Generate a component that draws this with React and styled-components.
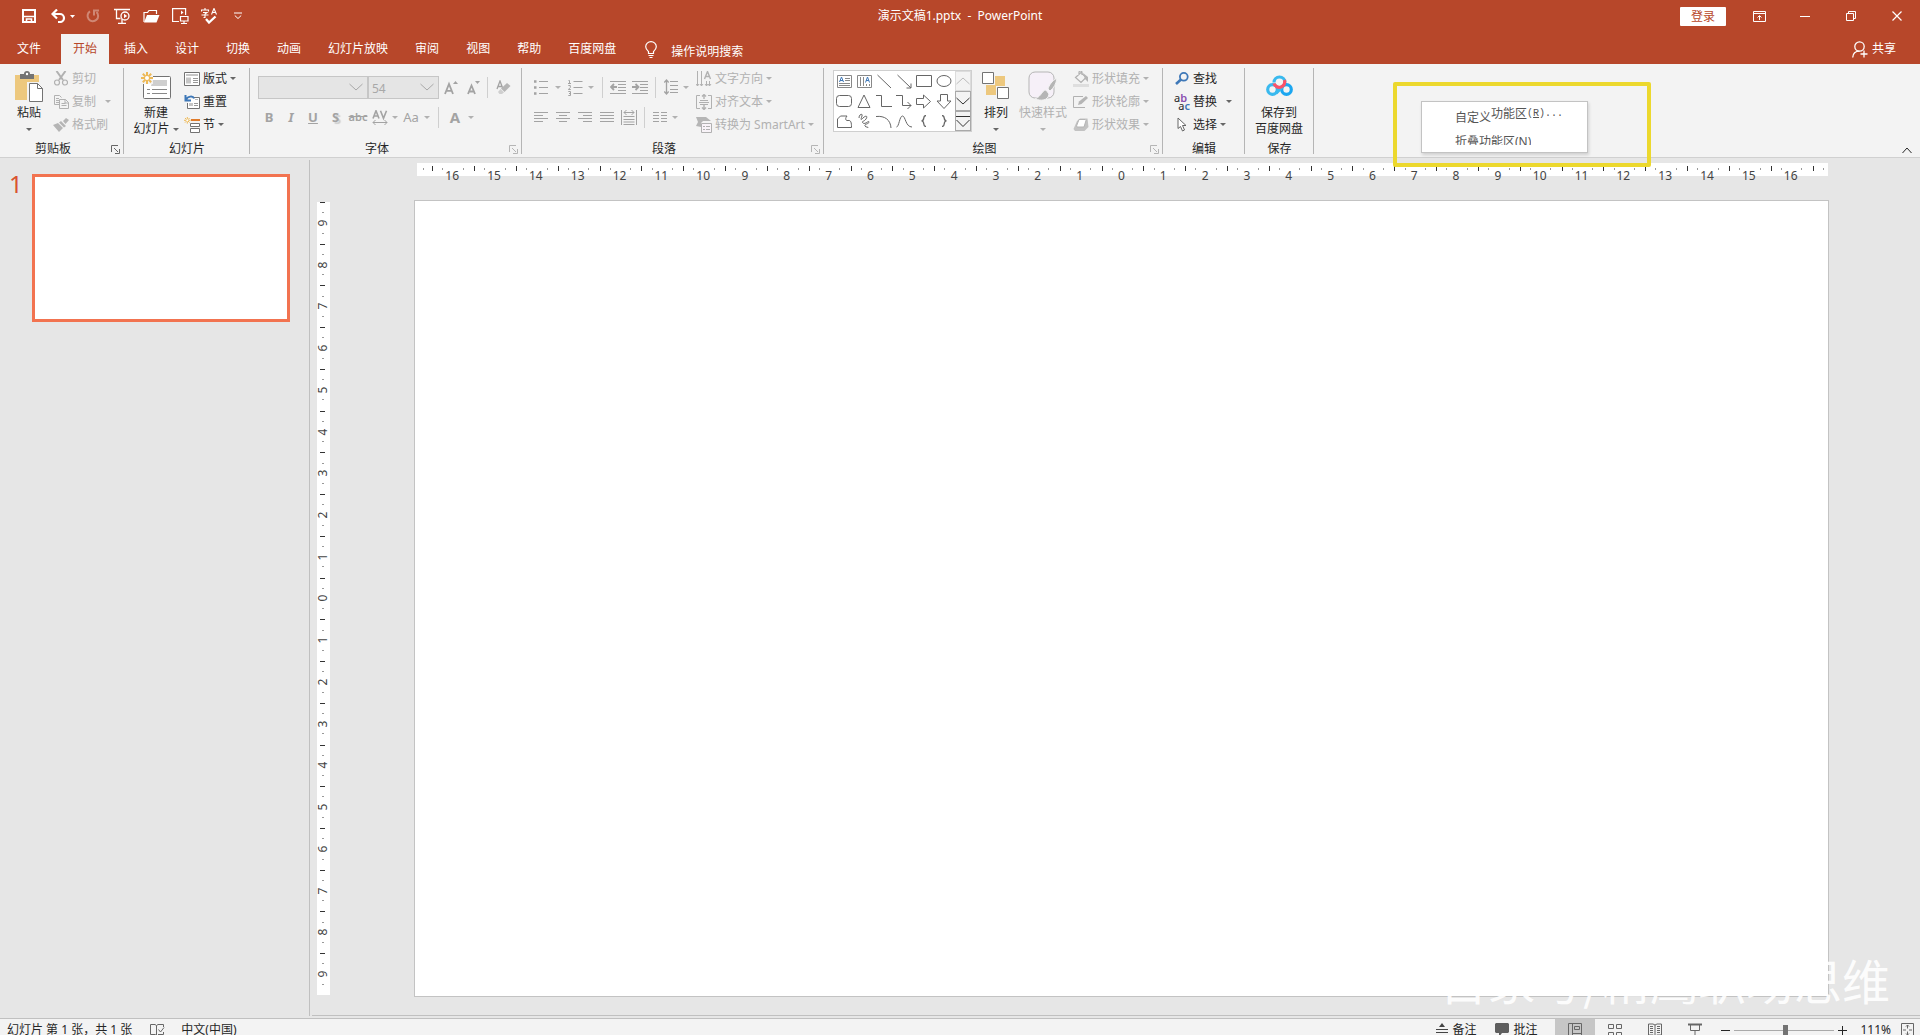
import React, { useState } from 'react';
import styled, { createGlobalStyle, css } from 'styled-components';

const GlobalStyle = createGlobalStyle`
  * { box-sizing: border-box; }
  body {
    margin: 0;
    overflow: hidden;
    background: #e6e6e6;
    color: #262626;
    font: 12px/16px "Noto Sans", "Noto Sans CJK SC", sans-serif;
  }
  button, input, select {
    margin: 0;
    padding: 0;
    border: 0;
    background: none;
    color: inherit;
    font: inherit;
  }
`

const Page = styled.div`
  display: flex;
  flex-direction: column;
  height: 100vh;
`

/* title bar */

const TitleBar = styled.header`
  display: grid;
  grid-template-columns: 1fr auto 1fr;
  align-items: center;
  height: 32px;
  background: #b7472a;
  color: #fff;
`
const QuickAccess = styled.div`
  display: flex;
  align-items: center;
  padding-left: 22px;
`
const QuickButton = styled.button`
  display: flex;
  align-items: center;
  gap: 4px;
  margin-right: ${p => p.$gap || 12}px;
  opacity: ${p => p.disabled ? 0.35 : 1};
`
const Title = styled.h1`
  margin: 0;
  font-size: 12px;
  font-weight: 400;
  white-space: pre;
`
const WindowControls = styled.div`
  display: flex;
  justify-content: flex-end;
  align-items: center;
`
const SignIn = styled.button`
  width: 46px;
  height: 19px;
  margin: 0 10px 0 0;
  line-height: 19px;
  border-radius: 1px;
  background: #fff;
  color: #b7472a;
`
const WindowButton = styled.button`
  display: flex;
  align-items: center;
  justify-content: center;
  width: 46px;
  height: 32px;
`

/* tabs */

const TabBar = styled.nav`
  display: flex;
  align-items: flex-end;
  height: 32px;
  padding: 0 24px 0 5px;
  background: #b7472a;
  color: #fff;
`
const Tab = styled.button`
  height: 30px;
  margin-right: ${p => p.$file ? 8 : 3}px;
  padding: 0 12px;
  line-height: 30px;
  ${p => p.$active && css`
    background: #f3f3f3;
    color: #b7472a;
  `}
`
const TellMe = styled.label`
  display: flex;
  align-items: center;
  gap: 14px;
  height: 30px;
  margin-left: 14px;
`
const TellMeInput = styled.input`
  width: 90px;
  height: 20px;
  padding-top: 4px;
  line-height: 16px;
  &::placeholder { color: #fff; opacity: 1; }
`
const Share = styled.button`
  display: flex;
  align-items: center;
  gap: 4px;
  height: 30px;
  margin-left: auto;
`

/* ribbon */

const RibbonBar = styled.section`
  position: relative;
  display: flex;
  height: 94px;
  background: #f3f3f3;
  border-bottom: 1px solid #d0d0d0;
`
const GroupBox = styled.div`
  display: flex;
  flex-direction: column;
  flex: none;
  width: ${p => p.$width}px;
  padding-top: 3px;
  background: linear-gradient(#b5b5b5, #b5b5b5) right 4px / 1px 86px no-repeat;
`
const GroupBody = styled.div`
  display: flex;
  flex: 1;
  padding-left: ${p => p.$pad}px;
`
const GroupFooter = styled.div`
  display: flex;
  align-items: center;
  height: 16px;
`
const GroupLabel = styled.span`
  flex: 1;
  text-align: center;
`
const Launcher = styled.button`
  display: flex;
  margin: 0 4px 0 5px;
  color: ${p => p.disabled ? '#b5b5b5' : '#666'};
`
const BigButton = styled.button`
  display: flex;
  flex-direction: column;
  align-items: center;
  width: ${p => p.$width}px;
  height: 72px;
  margin-left: ${p => p.$left || 0}px;
  color: ${p => p.disabled ? '#b1b1b1' : '#262626'};
`
const BigIcon = styled.span`
  display: flex;
  align-items: center;
  height: 38px;
`
const BigLine = styled.span`
  display: flex;
  align-items: center;
  gap: 3px;
  height: 16px;
  white-space: nowrap;
`
const SmallColumn = styled.div`
  display: flex;
  flex-direction: column;
  align-items: flex-start;
  margin-left: ${p => p.$left || 0}px;
`
const SmallButton = styled.button`
  display: flex;
  align-items: center;
  gap: 3px;
  height: 23px;
  color: ${p => p.disabled ? '#b1b1b1' : '#262626'};
  white-space: nowrap;
`
const SmallIcon = styled.span`
  display: flex;
  justify-content: center;
  width: 16px;
`
const Arrow = styled.span`
  width: 0;
  height: 0;
  margin-left: ${p => p.$far ? 6 : 0}px;
  border: 3px solid transparent;
  border-top-color: ${p => p.$dim ? '#b1b1b1' : '#666'};
  border-bottom: 0;
`
const ToolRows = styled.div`
  display: flex;
  flex-direction: column;
  gap: 6px;
  width: ${p => p.$width}px;
  padding-top: 8px;
`
const ToolRow = styled.div`
  display: flex;
  align-items: center;
  height: 24px;
`
const Tool = styled.button`
  display: flex;
  align-items: center;
  justify-content: center;
  flex: none;
  width: ${p => p.$width || 22}px;
  height: 22px;
  color: #a3a3a3;
  font-size: ${p => p.$size || 13}px;
  font-weight: ${p => p.$bold ? 700 : 400};
`
const Struck = styled.s`
  font-size: 11px;
  font-weight: 600;
`
const Shadowed = styled.span`
  text-shadow: 2px 2px 1px #ccc;
`
const Divider = styled.i`
  width: 1px;
  height: 21px;
  margin: 0 ${p => p.$right}px 0 ${p => p.$left}px;
  background: #cfcfcf;
`
const Combo = styled.span`
  display: flex;
  align-items: center;
  width: ${p => p.$width}px;
  height: 23px;
  padding-right: 4px;
  background: #e5e5e5;
  border: 1px solid #c6c6c6;
  color: #a8a8a8;
`
const ComboSelect = styled.select`
  flex: 1;
  min-width: 0;
  height: 20px;
  padding: 3px 0 0 3px;
  appearance: none;
  opacity: 1;
  color: #a8a8a8;
`
const Gallery = styled.div`
  display: flex;
  width: 139px;
  height: 62px;
  margin-top: 3px;
  background: #fff;
  border: 1px solid #cfcfcf;
`
const ShapeGrid = styled.div`
  display: grid;
  grid-template-columns: repeat(6, 20px);
  grid-template-rows: repeat(3, 20px);
  flex: 1;
`
const ShapeButton = styled.button`
  display: flex;
  align-items: center;
  justify-content: center;
`
const GalleryScroll = styled.div`
  display: flex;
  flex-direction: column;
  width: 16px;
`
const ScrollButton = styled.button`
  display: flex;
  flex: 1;
  align-items: center;
  justify-content: center;
  background: #f3f3f3;
  border: 1px solid ${p => p.disabled ? '#dcdcdc' : '#a9a9a9'};
  color: ${p => p.disabled ? '#bbb' : '#333'};
`
const Collapse = styled.button`
  display: flex;
  align-self: flex-end;
  margin: 0 8px 3px auto;
`
const Highlight = styled.div`
  position: absolute;
  z-index: 2;
  top: 18px;
  left: 1393px;
  width: 258px;
  height: 85px;
  padding: 15px 59px 15px 24px;
  border: 4px solid #ecd82d;
  border-radius: 2px;
`
const Menu = styled.div`
  height: 52px;
  background: #fff;
  border: 1px solid #c3c3c3;
  box-shadow: 1px 2px 3px rgba(0, 0, 0, 0.15);
  color: #555;
`
const MenuItem = styled.button`
  display: flex;
  height: ${p => p.$short ? 17 : 26}px;
  padding-left: 33px;
  overflow: hidden;
  line-height: ${p => p.$short ? 27 : 24}px;
  white-space: nowrap;
`
const Lowered = styled.span`
  align-self: flex-end;
  line-height: 20px;
`
const Mono = styled.span`
  font: 10px/24px "Liberation Mono", monospace;
`

/* workspace */

const Workspace = styled.main`
  display: flex;
  flex: 1;
  min-height: 0;
`
const SlidePane = styled.aside`
  display: flex;
  align-items: flex-start;
  width: 310px;
  margin: 2px 0;
  padding: 14px 19px 0 9px;
  border-right: 1px solid #c0c0c0;
`
const SlideNumber = styled.span`
  width: 23px;
  margin-top: -6px;
  color: #d9532f;
  font-size: 24px;
  line-height: 32px;
`
const Thumbnail = styled.button`
  flex: 1;
  height: 148px;
  background: #fff;
  border: 3px solid #f27350;
`
const Editor = styled.div`
  display: flex;
  flex: 1;
  flex-direction: column;
  min-width: 0;
`
const TopRuler = styled.div`
  display: flex;
  height: 13px;
  margin: 5px 92px 24px 107px;
  background: #fff;
  color: #444;
`
const TopUnit = styled.span`
  flex: 167 0 0;
  padding: 5px 2px 0 0;
  text-align: center;
  background:
    linear-gradient(#333, #333) 0 3px / 1px 5px no-repeat,
    linear-gradient(#999, #999) 25% 5px / 1px 2px no-repeat,
    linear-gradient(#999, #999) 75% 5px / 1px 2px no-repeat;
`
const TopEnd = styled.span`
  flex: 64 0 0;
  background:
    linear-gradient(#333, #333) 0 3px / ${p => p.$last ? 1 : 0}px 5px no-repeat,
    linear-gradient(#999, #999) ${p => p.$last ? 70 : 40}% 5px / 1px 2px no-repeat;
`
const Canvas = styled.div`
  display: flex;
  flex: 1;
  min-height: 0;
  margin: 0 91px 18px 7px;
`
const SideRuler = styled.div`
  display: flex;
  flex-direction: column;
  width: 13px;
  margin: 2px 84px 2px 0;
  background: #fff;
  color: #444;
`
const SideUnit = styled.span`
  display: flex;
  flex: 1;
  align-items: center;
  justify-content: center;
  background:
    linear-gradient(#333, #333) 3px 0 / 5px 1px no-repeat,
    linear-gradient(#999, #999) 5px 25% / 2px 1px no-repeat,
    linear-gradient(#999, #999) 5px 75% / 2px 1px no-repeat;
`
const Turned = styled.span`
  transform: rotate(-90deg);
`
const Slide = styled.section`
  flex: 1;
  background: #fff;
  border: 1px solid #c3c3c3;
`
const PaneEdge = styled.div`
  height: 3px;
  margin-left: 2px;
  border-top: 1px solid #c0c0c0;
`
const Watermark = styled.div`
  position: absolute;
  right: 30px;
  bottom: 20px;
  color: rgba(255, 255, 255, 0.93);
  font: 48px/72px "Noto Sans CJK SC", sans-serif;
  pointer-events: none;
`

/* status bar */

const StatusBar = styled.footer`
  display: flex;
  align-items: flex-start;
  height: 17px;
  padding: 0 6px 0 7px;
  overflow: hidden;
  background: #f3f3f3;
  border-top: 1px solid #c0c0c0;
`
const StatusItem = styled.button`
  display: flex;
  flex: none;
  align-items: center;
  justify-content: center;
  gap: 4px;
  height: 22px;
  width: ${p => p.$width ? p.$width + 'px' : 'auto'};
  margin-right: ${p => p.$gap || 0}px;
  background: ${p => p.$active ? '#c6c6c6' : 'none'};
  color: ${p => p.$icon ? '#666' : '#262626'};
  white-space: pre;
`
const StatusSpace = styled.span`
  flex: 1;
`
const ZoomSlider = styled.input`
  width: 100px;
  height: 22px;
  margin: 0 4px;
  appearance: none;
  &::-webkit-slider-runnable-track {
    height: 1px;
    background: #aaa;
  }
  &::-webkit-slider-thumb {
    appearance: none;
    width: 5px;
    height: 11px;
    margin-top: -5px;
    background: #737373;
  }
`

const Icon = ({ w, h, children, ...rest }) => (
  <svg width={w} height={h} viewBox={`0 0 ${w} ${h}`} fill="none" stroke="currentColor" aria-hidden="true" {...rest}>
    {children}
  </svg>
)

const Chevron = ({ up, w = 14, h = 8 }) => (
  <Icon w={w} h={h}>
    <path d={up ? `M.5 ${h - 1}L${w / 2} 1L${w - .5} ${h - 1}` : `M.5 1L${w / 2} ${h - 1}L${w - .5} 1`} />
  </Icon>
)

const SaveIcon = () => (
  <Icon w={14} h={14}><path d="M1 1h12v12H1z" strokeWidth="2" /><path d="M2 7.5h10M4.5 13v-3h5v3" strokeWidth="1.6" /></Icon>
)
const UndoIcon = () => (
  <Icon w={15} h={14}><path d="M2 5h7a4 4 0 0 1 0 8H7" strokeWidth="2.2" /><path d="M6 .5L1.5 5L6 9.5" strokeWidth="2.2" /></Icon>
)
const RedoIcon = () => (
  <Icon w={14} h={14}><path d="M4 2.4A5.3 5.3 0 1 0 10.5 3" strokeWidth="2" /><path d="M8 6.5V1.5h5" strokeWidth="2" /></Icon>
)
const ShowIcon = () => (
  <Icon w={17} h={16}>
    <path d="M0 1.5h16M2.5 2v8.5h4M8 11v4M4 15.5h8" strokeWidth="1.3" />
    <circle cx="11" cy="8" r="4" strokeWidth="1.3" /><path d="M10 5.8v4.4l3.2-2.2z" fill="currentColor" stroke="none" />
  </Icon>
)
const FolderIcon = () => (
  <Icon w={17} h={14}>
    <path d="M1 13V3.5h3.5L6 1.5h7.5V5" strokeWidth="1.2" /><path d="M1 13.5L4 6h12.5L13.5 13.5z" fill="currentColor" stroke="none" />
  </Icon>
)
const TouchIcon = () => (
  <Icon w={17} h={16}>
    <path d="M7 13.5H.6V.6h13V7" strokeWidth="1.2" /><path d="M9 2.5v4l2.5-2z" fill="currentColor" stroke="none" />
    <path d="M8.5 8.5h7.5v4.500h-7.5zM12 13v2M9 15.5h6" strokeWidth="1.2" />
  </Icon>
)
const SpellIcon = () => (
  <Icon w={17} h={16}>
    <path d="M4 0v1.5M.5 3.5V2h7v1.5M2 4.500h4L4 6v3.500H2.5M.5 7h7M10.5 6.5L13 .5l2.5 6M11.3 4.500h3.4" strokeWidth="1.1" />
    <path d="M5 11l3 3.5L14.5 8.5" strokeWidth="2.3" />
  </Icon>
)
const CustomizeIcon = () => (
  <Icon w={8} h={8}><path d="M0 1h8M.8 3.5L4 6.500L7.2 3.5" /></Icon>
)
const BulbIcon = () => (
  <Icon w={12} h={17}>
    <path d="M3.5 12.5v-2C2 9 .7 7.8.7 5.7a5.3 5 0 0 1 10.6 0c0 2.1-1.3 3.3-2.8 4.8v2zM3.5 14.5h5M4.500 16.5h3" strokeWidth="1.2" />
  </Icon>
)
const PersonIcon = () => (
  <Icon w={16} h={17}>
    <circle cx="7.5" cy="5.5" r="4.7" strokeWidth="1.3" /><path d="M.7 16.5C1 12 4 10.2 7.5 10.2M12 9.5v7M8.5 13h7" strokeWidth="1.3" />
  </Icon>
)
const PasteIcon = () => (
  <Icon w={28} h={31}>
    <path d="M0 4h24v25H0z" fill="#edc87e" stroke="none" />
    <path d="M5 3h4a3 3 0 0 1 6 0h4v5H5z" fill="#737373" stroke="none" /><circle cx="12" cy="3" r="1.2" fill="#fff" stroke="none" />
    <path d="M12 11h12v20H12z" fill="#f3f3f3" stroke="none" />
    <path d="M14.5 12.5h8l5 5v13h-13z" fill="#fff" stroke="#737373" /><path d="M22.5 12.5v5h5" stroke="#737373" />
  </Icon>
)
const CutIcon = () => (
  <Icon w={14} h={15}>
    <path d="M2.5 0L9 9M11.5 0L5 9" strokeWidth="2" /><circle cx="3" cy="11.5" r="2.5" strokeWidth="1.2" /><circle cx="11" cy="11.5" r="2.5" strokeWidth="1.2" />
  </Icon>
)
const CopyIcon = () => (
  <Icon w={15} h={14}>
    <path d="M5 9.5H.5V.5h5l2 2M2 3.5h3M2 5.5h3M2 7.5h3M5.5 4.5h6l3 3v6h-9zM7.5 8.5h4M7.5 10.5h5M11 4.5V8h3.5" />
  </Icon>
)
const BrushIcon = () => (
  <Icon w={16} h={14}>
    <path d="M0 7l5-2 5 5-4 4zM6 4.5l2-1.5 5 5-2 1.5zM10 3l3-3 3 2-3.5 4z" fill="#b5b5b5" stroke="none" />
  </Icon>
)
const Spark = ({ s = 1 }) => (
  <g stroke="#edb957" strokeWidth={s < 1 ? 1 : 2}>
    <path d={`M${6 * s} 0v${12 * s}M0 ${6 * s}h${12 * s}M${1.8 * s} ${1.8 * s}l${8.4 * s} ${8.4 * s}M${10.2 * s} ${1.8 * s}l${-8.4 * s} ${8.4 * s}`} />
    <circle cx={6 * s} cy={6 * s} r={2 * s} fill="#fff" stroke="none" />
  </g>
)
const NewSlideIcon = () => (
  <Icon w={31} h={28}>
    <rect x="2.5" y="4.5" width="27" height="22" rx="1" fill="#fff" stroke="#737373" />
    <path d="M12 8h14v6H10z" fill="#cfcfcf" stroke="none" /><path d="M6 17.5h3M11 17.5h15M6 21.5h3M11 21.5h15" stroke="#888" />
    <path d="M0 0h12v12H0z" fill="#f3f3f3" stroke="none" /><Spark />
  </Icon>
)
const LayoutIcon = () => (
  <Icon w={16} h={14} stroke="#737373">
    <path d="M.5.5h15v13H.5z" fill="#fff" /><path d="M2 3h12" stroke="#c6c6c6" strokeWidth="2" />
    <path d="M2 5.5h5v6H2z" fill="#c6c6c6" stroke="none" /><path d="M9 6.5h5M9 8.5h5M9 10.5h5" stroke="#999" />
  </Icon>
)
const ResetIcon = () => (
  <Icon w={16} h={14} stroke="#737373">
    <path d="M9 2.5h6.5v11H3.5V8" fill="#fff" /><path d="M11 4.5h3" stroke="#bbb" />
    <path d="M5 8h4v3H5z" fill="#c6c6c6" stroke="none" /><path d="M10 8.5h4M10 10.5h4" stroke="#999" />
    <path d="M1.5 0v5.5H7M2 5c1.5-4 7-4.5 8-1.5" stroke="#3e78b8" strokeWidth="2" />
  </Icon>
)
const SectionIcon = () => (
  <Icon w={16} h={16} stroke="#737373">
    <Spark s={0.55} /><path d="M7 3h9" stroke="#e07b2b" strokeWidth="2" /><path d="M6.5 6.5h9v3h-9z" fill="#fff" /><path d="M6.5 11.5h9v4h-9z" fill="#fff" />
  </Icon>
)
const EraserIcon = () => (
  <Icon w={15} h={15}>
    <path d="M1 9L4 1l3 8M2 6.5h4" strokeWidth="1.3" />
    <path d="M11 3l3.5 3L8.500 12 5 8.500z" fill="#b5b5b5" stroke="none" /><path d="M4.5 9l3.5 3.5L6 14H3.500L2 12z" fill="#cfcfcf" stroke="none" />
  </Icon>
)
const GrowIcon = ({ small }) => (
  <Icon w={14} h={15}>
    <path d={small ? 'M2 14L5.5 5.500 9 14M3.5 11.5h4' : 'M1 14L5 4l4 10M2.5 10.8h5'} strokeWidth="1.8" />
    <path d={small ? 'M9 1h5l-2.5 3z' : 'M9 4h5l-2.5-3z'} fill="currentColor" stroke="none" />
  </Icon>
)
const CharSpacingIcon = () => (
  <Icon w={16} h={15}>
    <path d="M1 8.5L4 .7l3 7.8M2 6h4M8.5.7l3 7.6 3-7.6" strokeWidth="1.6" /><path d="M1 12.5h14M3.5 10L1 12.5 3.5 15M12.5 10l2.5 2.5-2.5 2.5" />
  </Icon>
)
const BulletIcon = () => (
  <Icon w={14} h={16}>
    <path d="M5 2.5h9M5 8.5h9M5 14.5h9" strokeWidth="1.1" /><path d="M0 2.5h2.5M0 8.5h2.5M0 14.5h2.5" strokeWidth="2.5" />
  </Icon>
)
const NumberIcon = () => (
  <Icon w={15} h={17}>
    <path d="M5.5 2.5h9M5.5 8.5h9M5.5 14.5h9" /><path d="M.5 1.5h1v3M0 4.5h3M.3 6.5h2v2l-2 2h2.5M.3 12.5h2.2v4H.3M1 14.5h1.5" />
  </Icon>
)
const IndentIcon = ({ more }) => (
  <Icon w={16} h={14}>
    <path d="M0 1.5h16M8 4.5h8M8 7.5h8M8 10.5h8M0 13.5h16" />
    <path d={more ? 'M0 7h6M3.5 4L6.5 7l-3 3' : 'M7 7H1M4 4L1 7l3 3'} strokeWidth="1.8" />
  </Icon>
)
const LineSpacingIcon = () => (
  <Icon w={15} h={16}>
    <path d="M6 2.5h8M6 6.5h8M6 10.5h8M6 13.5h8" /><path d="M2.5 1v14M.3 3.5L2.5 1l2.2 2.5M.3 12.5L2.5 15l2.2-2.5" strokeWidth="1.3" />
  </Icon>
)
const alignLines = {
  left: 'M0 4.5h9M0 10.5h9',
  center: 'M3 4.5h8M3 10.5h8',
  right: 'M5 4.5h9M5 10.5h9',
  justify: 'M0 4.5h14M0 10.5h14',
}
const AlignIcon = ({ kind }) => (
  <Icon w={14} h={12}><path d={'M0 1.5h14M0 7.5h14' + alignLines[kind]} /></Icon>
)
const DistributeIcon = () => (
  <Icon w={16} h={17}>
    <path d="M.5 1v15M15.5 1v15M3 3.5h10M5.5 1L3 3.5 5.5 6M10.5 1L13 3.5 10.5 6M2.5 7.5h11M2.5 10.500h11M2.5 13h11M2.5 15.5h11" />
  </Icon>
)
const ColumnsIcon = () => (
  <Icon w={14} h={12}><path d="M0 1.5h6M8 1.5h6M0 4.5h6M8 4.5h6M0 7.5h6M8 7.5h6M0 10.5h6M8 10.5h6" /></Icon>
)
const TextDirIcon = () => (
  <Icon w={16} h={16}>
    <path d="M1.5 0v15M5.5 0v15M10.5 10v5M13.5 10v5M0 13l1.5 2L3 13M4 13l1.5 2L7 13M9 13l1.5 2 1.5-2 1.5 2 1.5-2" />
    <path d="M8.5 8L11.5.5l3 7.5M9.5 5.5h4" strokeWidth="1.4" />
  </Icon>
)
const TextAlignIcon = () => (
  <Icon w={16} h={16}>
    <path d="M4 1.500H.5v13H4M12 1.500h3.500v13H12M4 6.5h8M3 8.5h10M4 10.5h8" /><path d="M8 0v5M6 2.5L8 .5l2 2M8 11v5M6 13.5l2 2 2-2" strokeWidth="1.4" />
  </Icon>
)
const SmartArtIcon = () => (
  <Icon w={16} h={16}>
    <path d="M0 0h10l5 4h-8L5 6v4L0 9l2-4z" fill="#b5b5b5" stroke="none" /><path d="M5.5 6.5h10v9h-10z" fill="#f8f3f8" /><path d="M7 9.5h2M10 9.5h4M7 12.5h2M10 12.5h4" />
  </Icon>
)
const ArrangeIcon = () => (
  <Icon w={28} h={28} stroke="#737373">
    <path d="M13 4h10v10H13zM4 13h10v10H4z" fill="#edc87e" stroke="none" /><path d="M.5.5h11v11H.5zM15.5 15.5h11v11h-11z" fill="#fff" />
  </Icon>
)
const StyleIcon = () => (
  <Icon w={30} h={30}>
    <rect x="1" y="1" width="25" height="26" rx="6" fill="#f6f0f8" stroke="#b5b5b5" />
    <path d="M29 7c-5 3-8 7-9 11l2 2c4-3 6-7 7-13zM18 19c-4 0-4 6-11 9 6 2 13 2 14-5z" fill="#b5b5b5" stroke="#f3f3f3" />
  </Icon>
)
const FillIcon = () => (
  <Icon w={16} h={16}>
    <path d="M0 13h16v3H0z" fill="#dedede" stroke="none" /><path d="M2.5 6.5L8 1.500l5 5-5 5zM6 4V1.5a1.500 1.5 0 0 1 3 0V4" strokeWidth="1.2" />
    <path d="M10 2l5 4v5l-3-3z" fill="#b5b5b5" stroke="none" />
  </Icon>
)
const OutlineIcon = () => (
  <Icon w={16} h={14}><path d="M10 1.5H.5v11H12" /><path d="M5 10l1-3.5L13 1l2 2-6.5 6z" fill="#b5b5b5" stroke="none" /></Icon>
)
const EffectIcon = () => (
  <Icon w={16} h={14}>
    <path d="M4 3l3-2.5h7.5L15.5 9l-4 4H2L.5 11z" fill="#c3c3c3" stroke="none" /><path d="M6 1.5h6l1 1-2 6.5H4L3.5 8z" fill="#fff" stroke="#b5b5b5" />
  </Icon>
)
const FindIcon = () => (
  <Icon w={14} h={13} stroke="#3e78b8"><circle cx="8.8" cy="4.8" r="3.9" strokeWidth="1.8" /><path d="M6 7.5L1 12" strokeWidth="2.6" /></Icon>
)
const PointerIcon = () => (
  <Icon w={10} h={15} stroke="#666"><path d="M1 1v10.5L3.5 9.5 5.5 14l2-1L5.5 8.5H9z" fill="#fff" /></Icon>
)
const ReplaceMark = styled.span`
  display: flex;
  flex-direction: column;
  width: 16px;
  font-size: 11px;
  line-height: 8px;
`
const ReplaceTop = styled.span`
  align-self: flex-start;
  b { font-weight: 600; color: #8a4fb0; }
`
const ReplaceBottom = styled.span`
  align-self: flex-end;
  b { font-weight: 600; color: #3e78b8; }
`
const CloudIcon = () => (
  <Icon w={27} h={22}>
    <circle cx="6.5" cy="14.5" r="4.8" stroke="#39b9ee" strokeWidth="3.2" /><circle cx="20.5" cy="14.5" r="4.8" stroke="#1ba6f0" strokeWidth="3.2" />
    <path d="M10 18l7-7" stroke="#39b9ee" strokeWidth="3.5" />
    <path d="M8 7.5a5.5 5.5 0 0 1 11 0" stroke="#39b9ee" strokeWidth="3.2" /><path d="M18.5 5a5.5 5.5 0 1 1-10.500 3.500" stroke="#fb5168" strokeWidth="3.2" />
  </Icon>
)
const LauncherIcon = () => (
  <Icon w={9} h={9}><path d="M.5 7V.5H7M3 3l4 4M8.5 4v4.5H4" /></Icon>
)

const shapes = [
  ['文本框', <Icon w={15} h={13}><path d="M.5.5h14v12H.5zM8 3.5h5M8 5.5h5M2 8.5h11M2 10.5h11" stroke="#888" /><path d="M2.500 7L4.500 2 6.500 7M3 5.5h3" stroke="#3e78b8" /></Icon>],
  ['竖排文本框', <Icon w={15} h={13}><path d="M.5.5h14v12H.5zM3.5 2v9M6.5 2v9M9.5 9v2M12.500 9v2" stroke="#888" /><path d="M8.5 7.5L10.5 2l2 5.5M9 5.500h3" stroke="#3e78b8" /></Icon>],
  ['直线', <Icon w={15} h={15}><path d="M.5 1L14 14" /></Icon>],
  ['箭头', <Icon w={15} h={15}><path d="M.5 1L14 14M14 9.5V14H9.5" /></Icon>],
  ['矩形', <Icon w={16} h={12}><path d="M.5.5h15v11H.5z" /></Icon>],
  ['椭圆', <Icon w={16} h={12}><ellipse cx="8" cy="6" rx="7" ry="5.5" /></Icon>],
  ['圆角矩形', <Icon w={16} h={12}><rect x=".5" y=".5" width="15" height="11" rx="3" /></Icon>],
  ['三角形', <Icon w={14} h={14}><path d="M7 1l6 12.5H1z" /></Icon>],
  ['肘形连接符', <Icon w={16} h={12}><path d="M0 .5h5.5v11H16" /></Icon>],
  ['肘形箭头', <Icon w={16} h={15}><path d="M0 1.5h6.500v10H15M11.5 8l3.5 3.5-3.5 3.5" /></Icon>],
  ['右箭头', <Icon w={16} h={15}><path d="M.5 4.5h7V1l7 6.5-7 6.500v-3.500h-7z" /></Icon>],
  ['下箭头', <Icon w={16} h={15}><path d="M4.5.5h7V7H15l-7 7.5L1 7h3.5z" /></Icon>],
  ['任意多边形', <Icon w={15} h={13}><path d="M.5 12.5V4l3-3H10C7.5 4 9 6 11 5.5c3-.5 3.5 2 3.5 7z" /></Icon>],
  ['曲线', <Icon w={12} h={16}><path d="M1 5c0-4 4-5 3-2S2 8 5 5s5-2 3 1-5 2-3 4 6-3 6-1-5 2-4 4 3 0 3 2" /></Icon>],
  ['弧形', <Icon w={16} h={13}><path d="M0 1.5C9 .5 14.5 5 15 13" /></Icon>],
  ['波形', <Icon w={16} h={13}><path d="M.5 12C3 12 3.5 1 6.500 1S9.5 12 16 12" /></Icon>],
  ['左大括号', <Icon w={8} h={12}><path d="M6 .5C2 .5 5.5 5.7 1.5 5.900 5.500 6 2 11.500 6 11.500" strokeWidth="1.3" /></Icon>],
  ['右大括号', <Icon w={8} h={12}><path d="M2 .5C6 .5 2.500 5.700 6.500 5.900 2.500 6 6 11.500 2 11.500" strokeWidth="1.3" /></Icon>],
];

const tabs = ['开始', '插入', '设计', '切换', '动画', '幻灯片放映', '审阅', '视图', '帮助', '百度网盘'];
const topUnits = Array.from({ length: 33 }, (_, i) => Math.abs(i - 16));
const sideUnits = Array.from({ length: 19 }, (_, i) => Math.abs(i - 9));

const Group = ({ label, width, pad, launcher, children }) => (
  <GroupBox $width={width}>
    <GroupBody $pad={pad}>{children}</GroupBody>
    <GroupFooter>
      <GroupLabel>{label}</GroupLabel>
      {launcher ? <Launcher disabled={launcher === 'off'} aria-label={label + '设置'}><LauncherIcon /></Launcher> : null}
    </GroupFooter>
  </GroupBox>
)

const Small = ({ icon, label, arrow, disabled }) => (
  <SmallButton disabled={disabled}>
    <SmallIcon>{icon}</SmallIcon>
    <span>{label}</span>
    {arrow ? <Arrow $dim={disabled} $far={arrow === 'far'} /> : null}
  </SmallButton>
)

const ToolArrow = ({ width = 8 }) => (
  <Tool disabled $width={width} aria-label="更多"><Arrow $dim /></Tool>
)

const Ribbon = () => (
  <RibbonBar>
    <Group label="剪贴板" width={124} pad={10} launcher="on">
      <BigButton $width={38}>
        <BigIcon><PasteIcon /></BigIcon>
        <BigLine>粘贴</BigLine>
        <BigLine><Arrow /></BigLine>
      </BigButton>
      <SmallColumn $left={5}>
        <Small icon={<CutIcon />} label="剪切" disabled />
        <Small icon={<CopyIcon />} label="复制" arrow="far" disabled />
        <Small icon={<BrushIcon />} label="格式刷" disabled />
      </SmallColumn>
    </Group>
    <Group label="幻灯片" width={126} pad={8}>
      <BigButton $width={48}>
        <BigIcon><NewSlideIcon /></BigIcon>
        <BigLine>新建</BigLine>
        <BigLine>幻灯片<Arrow /></BigLine>
      </BigButton>
      <SmallColumn $left={4}>
        <Small icon={<LayoutIcon />} label="版式" arrow />
        <Small icon={<ResetIcon />} label="重置" />
        <Small icon={<SectionIcon />} label="节" arrow />
      </SmallColumn>
    </Group>
    <Group label="字体" width={272} pad={8} launcher="off">
      <ToolRows $width={260}>
        <ToolRow>
          <Combo $width={110}>
            <ComboSelect disabled aria-label="字体" /><Chevron />
          </Combo>
          <Combo $width={71}>
            <ComboSelect disabled aria-label="字号"><option>54</option></ComboSelect><Chevron />
          </Combo>
          <Tool disabled $width={24} aria-label="增大字号"><GrowIcon /></Tool>
          <Tool disabled $width={20} aria-label="减小字号"><GrowIcon small /></Tool>
          <Divider $left={4} $right={4} />
          <Tool disabled aria-label="清除格式"><EraserIcon /></Tool>
        </ToolRow>
        <ToolRow>
          <Tool disabled $bold>B</Tool>
          <Tool disabled $bold><i>I</i></Tool>
          <Tool disabled $bold><u>U</u></Tool>
          <Tool disabled $bold $width={23}><Shadowed>S</Shadowed></Tool>
          <Tool disabled><Struck>abc</Struck></Tool>
          <Tool disabled aria-label="字符间距"><CharSpacingIcon /></Tool>
          <ToolArrow />
          <Tool disabled $width={24}>Aa</Tool>
          <ToolArrow />
          <Divider $left={7} $right={6} />
          <Tool disabled $width={20} $size={15} $bold>A</Tool>
          <ToolArrow width={12} />
        </ToolRow>
      </ToolRows>
    </Group>
    <Group label="段落" width={302} pad={8} launcher="off">
      <ToolRows $width={166}>
        <ToolRow>
          <Tool disabled aria-label="项目符号"><BulletIcon /></Tool>
          <ToolArrow width={12} />
          <Tool disabled aria-label="编号"><NumberIcon /></Tool>
          <ToolArrow width={10} />
          <Divider $left={6} $right={4} />
          <Tool disabled aria-label="降低列表级别"><IndentIcon /></Tool>
          <Tool disabled aria-label="提高列表级别"><IndentIcon more /></Tool>
          <Divider $left={4} $right={4} />
          <Tool disabled aria-label="行距"><LineSpacingIcon /></Tool>
          <ToolArrow />
        </ToolRow>
        <ToolRow>
          <Tool disabled aria-label="左对齐"><AlignIcon kind="left" /></Tool>
          <Tool disabled aria-label="居中"><AlignIcon kind="center" /></Tool>
          <Tool disabled aria-label="右对齐"><AlignIcon kind="right" /></Tool>
          <Tool disabled aria-label="两端对齐"><AlignIcon kind="justify" /></Tool>
          <Tool disabled aria-label="分散对齐"><DistributeIcon /></Tool>
          <Divider $left={4} $right={4} />
          <Tool disabled aria-label="分栏"><ColumnsIcon /></Tool>
          <ToolArrow />
        </ToolRow>
      </ToolRows>
      <SmallColumn>
        <Small icon={<TextDirIcon />} label="文字方向" arrow disabled />
        <Small icon={<TextAlignIcon />} label="对齐文本" arrow disabled />
        <Small icon={<SmartArtIcon />} label="转换为 SmartArt" arrow disabled />
      </SmallColumn>
    </Group>
    <Group label="绘图" width={339} pad={9} launcher="off">
      <Gallery>
        <ShapeGrid>
          {shapes.map(([name, icon]) => (
            <ShapeButton key={name} aria-label={name}>{React.cloneElement(icon, { stroke: '#666' })}</ShapeButton>
          ))}
        </ShapeGrid>
        <GalleryScroll>
          <ScrollButton disabled aria-label="上一行"><Chevron up /></ScrollButton>
          <ScrollButton aria-label="下一行"><Chevron /></ScrollButton>
          <ScrollButton aria-label="其他"><Icon w={14} h={13}><path d="M0 1.5h14M.5 5L7 11.5 13.5 5" /></Icon></ScrollButton>
        </GalleryScroll>
      </Gallery>
      <BigButton $width={40} $left={4}>
        <BigIcon><ArrangeIcon /></BigIcon>
        <BigLine>排列</BigLine>
        <BigLine><Arrow /></BigLine>
      </BigButton>
      <BigButton $width={52} $left={1} disabled>
        <BigIcon><StyleIcon /></BigIcon>
        <BigLine>快速样式</BigLine>
        <BigLine><Arrow $dim /></BigLine>
      </BigButton>
      <SmallColumn $left={4}>
        <Small icon={<FillIcon />} label="形状填充" arrow disabled />
        <Small icon={<OutlineIcon />} label="形状轮廓" arrow disabled />
        <Small icon={<EffectIcon />} label="形状效果" arrow disabled />
      </SmallColumn>
    </Group>
    <Group label="编辑" width={82} pad={11}>
      <SmallColumn>
        <Small icon={<FindIcon />} label="查找" />
        <Small
          icon={<ReplaceMark><ReplaceTop>a<b>b</b></ReplaceTop><ReplaceBottom>a<b>c</b></ReplaceBottom></ReplaceMark>}
          label="替换" arrow="far" />
        <Small icon={<PointerIcon />} label="选择" arrow />
      </SmallColumn>
    </Group>
    <Group label="保存" width={69} pad={4}>
      <BigButton $width={60}>
        <BigIcon><CloudIcon /></BigIcon>
        <BigLine>保存到</BigLine>
        <BigLine>百度网盘</BigLine>
      </BigButton>
    </Group>
    <Collapse aria-label="折叠功能区"><Chevron up w={10} h={7} /></Collapse>
    <Highlight>
      <Menu role="menu">
        <MenuItem role="menuitem">
          <Lowered>自定义</Lowered>功能区<Mono>(<u>R</u>)...</Mono>
        </MenuItem>
        <MenuItem role="menuitem" $short>折叠功能区(<u>N</u>)</MenuItem>
      </Menu>
    </Highlight>
  </RibbonBar>
)

const Status = () => {
  const [ zoom, setZoom ] = useState(51);
  return (
    <StatusBar>
      <StatusItem $gap={18}>幻灯片 第 1 张，共 1 张</StatusItem>
      <StatusItem $icon $gap={16} aria-label="拼写检查">
        <Icon w={15} h={14}><path d="M6.500 12.5L5 11.5H.5v-10H5l1.500 1 1.500-1h5.500V4M6.500 2.5v11M8 11.5h5.500V9M8.500 6.500l2 2.500L14 4.500" /></Icon>
      </StatusItem>
      <StatusItem>中文(中国)</StatusItem>
      <StatusSpace />
      <StatusItem $gap={19}>
        <Icon w={12} h={14} stroke="#444"><path d="M0 6.5h12M0 9.5h12M0 12.5h12" /><path d="M6 0l3 4H3z" fill="#444" stroke="none" /></Icon>
        备注
      </StatusItem>
      <StatusItem $gap={18}>
        <Icon w={14} h={14} stroke="none"><path d="M1 0h12l1 1v8l-1 1H7l-3 4v-4H1L0 9V1z" fill="#5e5e5e" /></Icon>
        批注
      </StatusItem>
      <StatusItem $icon $active $width={40} aria-label="普通视图">
        <Icon w={14} h={14}><path d="M.5.5h13v13H.5zM4.5 1v12M6.5 3.5h5v3h-5zM4.5 10.5h9" /></Icon>
      </StatusItem>
      <StatusItem $icon $width={40} aria-label="幻灯片浏览">
        <Icon w={14} h={13}><path d="M.5.5h5v4h-5zM8.5.5h5v4h-5zM.5 8.5h5v4h-5zM8.5 8.5h5v4h-5z" /></Icon>
      </StatusItem>
      <StatusItem $icon $width={40} aria-label="阅读视图">
        <Icon w={14} h={14}><path d="M7 2v12M7 2L5 1H.5v11H5l2 1.5L9 12h4.5V1H9zM2 3.5h3M2 5.5h3M2 7.5h3M2 9.5h3M9 3.5h3M9 5.5h3M9 7.5h3M9 9.5h3" /></Icon>
      </StatusItem>
      <StatusItem $icon $width={40} $gap={6} aria-label="幻灯片放映">
        <Icon w={14} h={14}><path d="M0 1.5h14" strokeWidth="2" /><path d="M2.5 2v5.5h9V2M7 8v5M3.5 13.5h7" /></Icon>
      </StatusItem>
      <StatusItem aria-label="缩小"><Icon w={9} h={9}><path d="M0 4.5h9" /></Icon></StatusItem>
      <ZoomSlider type="range" aria-label="显示比例" value={zoom} onChange={e => setZoom(e.target.value)} />
      <StatusItem $gap={13} aria-label="放大"><Icon w={9} h={9}><path d="M0 4.5h9M4.5 0v9" /></Icon></StatusItem>
      <StatusItem $gap={10}>111%</StatusItem>
      <StatusItem $icon aria-label="适应窗口">
        <Icon w={13} h={14}><path d="M.5.5h12v13H.5zM6.5 2v3.5M6.5 8.5V12M2 7h3M8 7h3M5 3.5L6.5 2 8 3.5M5 10.5L6.5 12 8 10.5" /></Icon>
      </StatusItem>
    </StatusBar>
  )
}

const App = () => {
  const [ tab, setTab ] = useState('开始');

  return (
    <Page>
      <GlobalStyle />
      <TitleBar>
        <QuickAccess>
          <QuickButton $gap={15} aria-label="保存"><SaveIcon /></QuickButton>
          <QuickButton $gap={11} aria-label="撤消"><UndoIcon /><Icon w={5} h={3} stroke="none"><path d="M0 0h5L2.5 3z" fill="#fff" /></Icon></QuickButton>
          <QuickButton $gap={14} aria-label="恢复" disabled><RedoIcon /></QuickButton>
          <QuickButton aria-label="从头开始"><ShowIcon /></QuickButton>
          <QuickButton aria-label="打开"><FolderIcon /></QuickButton>
          <QuickButton aria-label="触摸模式"><TouchIcon /></QuickButton>
          <QuickButton $gap={16} aria-label="拼写"><SpellIcon /></QuickButton>
          <QuickButton aria-label="自定义快速访问工具栏"><CustomizeIcon /></QuickButton>
        </QuickAccess>
        <Title>{'演示文稿1.pptx  -  PowerPoint'}</Title>
        <WindowControls>
          <SignIn>登录</SignIn>
          <WindowButton aria-label="功能区显示选项">
            <Icon w={13} h={11}><path d="M.5.5h12v10H.5zM.5 2.5h12M6.500 9V5M4.500 6.500l2-2 2 2" /></Icon>
          </WindowButton>
          <WindowButton aria-label="最小化"><Icon w={10} h={1}><path d="M0 .5h10" /></Icon></WindowButton>
          <WindowButton aria-label="还原"><Icon w={10} h={10}><path d="M.5 2.5h7v7h-7zM2.5 2.5v-2h7v7h-2" /></Icon></WindowButton>
          <WindowButton aria-label="关闭"><Icon w={10} h={10}><path d="M.5.5l9 9M9.5.5l-9 9" strokeWidth="1.2" /></Icon></WindowButton>
        </WindowControls>
      </TitleBar>
      <TabBar>
        <Tab $file>文件</Tab>
        {tabs.map(t => <Tab key={t} $active={t === tab} onClick={() => setTab(t)}>{t}</Tab>)}
        <TellMe>
          <BulbIcon />
          <TellMeInput placeholder="操作说明搜索" aria-label="操作说明搜索" />
        </TellMe>
        <Share><PersonIcon />共享</Share>
      </TabBar>
      <Ribbon />
      <Workspace>
        <SlidePane>
          <SlideNumber>1</SlideNumber>
          <Thumbnail aria-label="幻灯片 1" />
        </SlidePane>
        <Editor>
          <TopRuler>
            <TopEnd />
            {topUnits.map((n, i) => <TopUnit key={i}>{n}</TopUnit>)}
            <TopEnd $last />
          </TopRuler>
          <Canvas>
            <SideRuler>
              {sideUnits.map((n, i) => <SideUnit key={i}><Turned>{n}</Turned></SideUnit>)}
            </SideRuler>
            <Slide />
          </Canvas>
          <PaneEdge />
        </Editor>
      </Workspace>
      <Status />
      <Watermark>百家号/精鹰职场思维</Watermark>
    </Page>
  )
};

export default App;
